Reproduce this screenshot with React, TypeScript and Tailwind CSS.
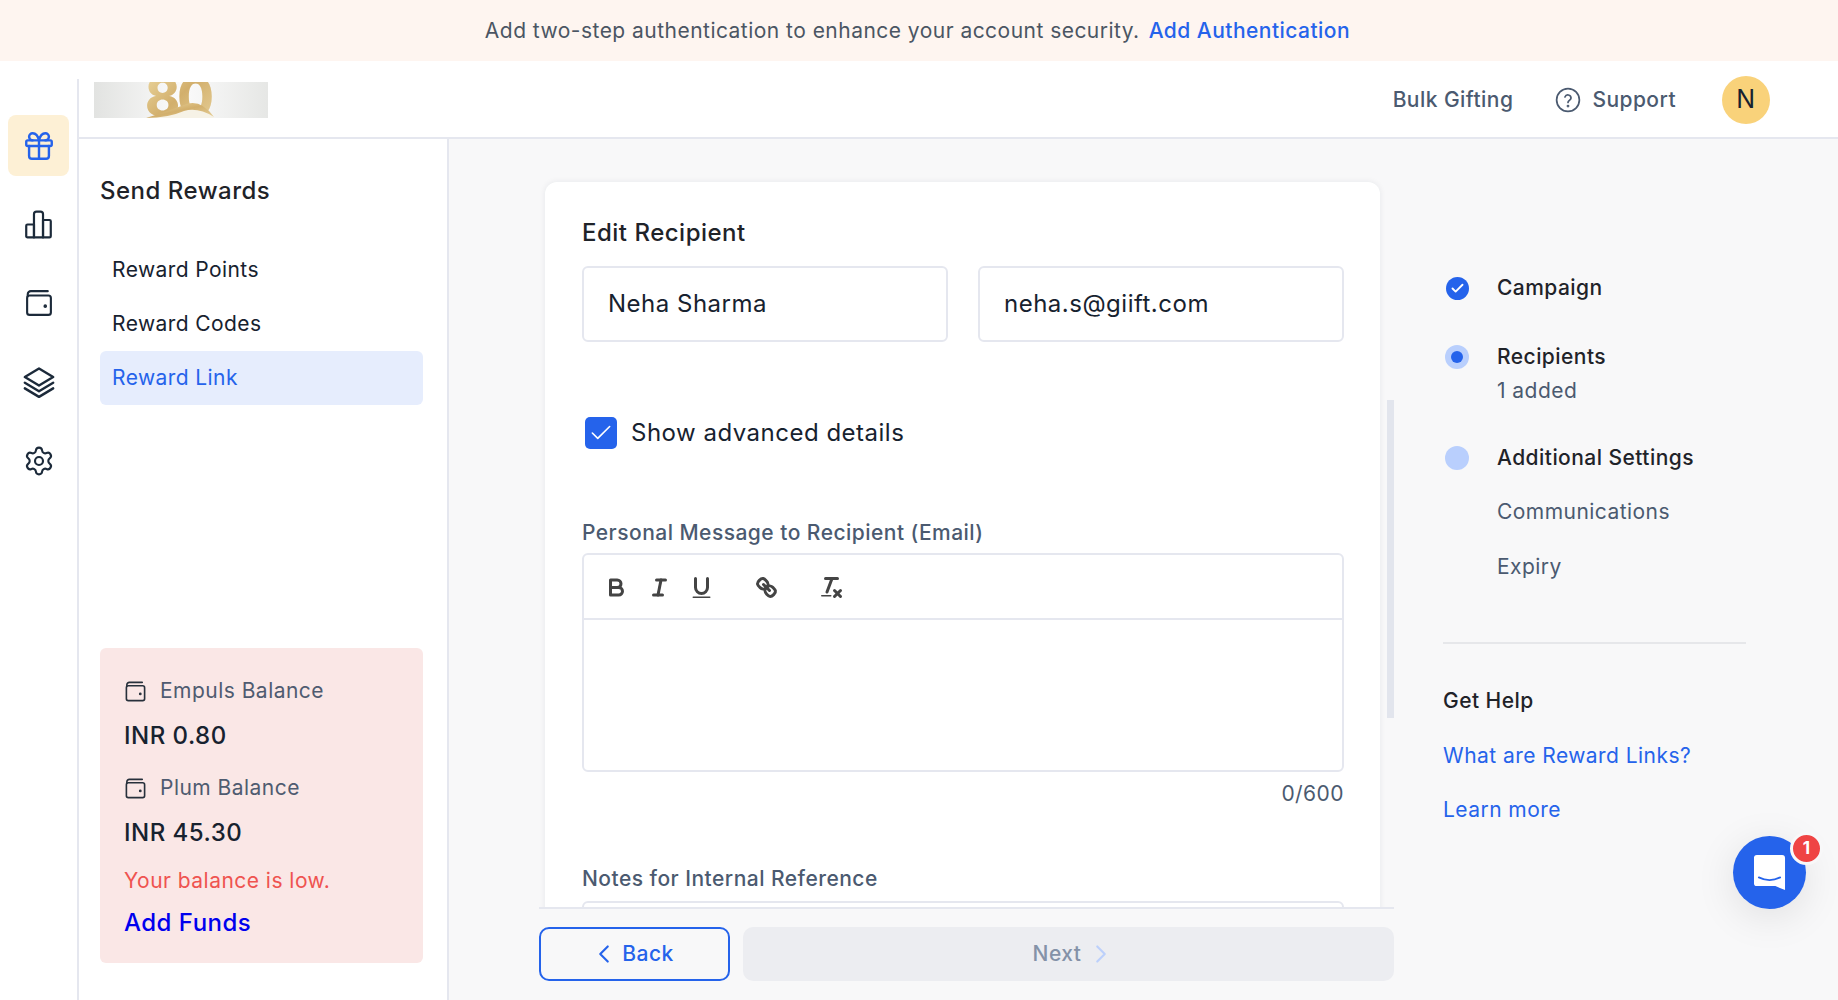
import React from "react";
import { Gift, Settings, ChevronLeft, ChevronRight, Check } from "lucide-react";

const F = "[font-family:Inter,'Liberation_Sans',sans-serif]";

function WalletIcon({ className = "" }: { className?: string }) {
  return (
    <svg viewBox="0 0 24 24" fill="none" stroke="currentColor" strokeWidth="1.7" strokeLinecap="round" strokeLinejoin="round" className={className}>
      <rect x="2.5" y="6" width="19" height="15.5" rx="2" />
      <path d="M3 6.5V5a2.5 2.5 0 0 1 2.5-2.5H19" />
      <circle cx="17" cy="14.5" r="0.6" fill="currentColor" />
    </svg>
  );
}

function BarsIcon({ className = "" }: { className?: string }) {
  return (
    <svg viewBox="0 0 24 24" fill="none" stroke="currentColor" strokeWidth="1.7" strokeLinejoin="round" className={className}>
      <path d="M2.5 13a1 1 0 0 1 1-1H8.5V22H3.5a1 1 0 0 1-1-1z" />
      <path d="M8.5 4a2 2 0 0 1 2-2h3a2 2 0 0 1 2 2v18h-7z" />
      <path d="M15.5 8.5h5a1 1 0 0 1 1 1V21a1 1 0 0 1-1 1h-5z" />
    </svg>
  );
}

function LayersIcon({ className = "" }: { className?: string }) {
  return (
    <svg viewBox="0 0 24 24" fill="none" stroke="currentColor" strokeWidth="1.7" strokeLinecap="round" strokeLinejoin="round" className={className}>
      <path d="M12 2.5 22 8.5 12 14.5 2 8.5z" />
      <path d="M2 12.5 12 18.5 22 12.5" />
      <path d="M2 16.5 12 22.5 22 16.5" />
    </svg>
  );
}

function HelpIcon({ className = "" }: { className?: string }) {
  return (
    <svg viewBox="0 0 24 24" fill="none" stroke="currentColor" strokeWidth="1.6" strokeLinecap="round" strokeLinejoin="round" className={className}>
      <circle cx="12" cy="12" r="10.5" />
      <path d="M9.2 9.2a2.9 2.9 0 0 1 5.6 1c0 1.9-2.8 2.4-2.8 4" />
      <circle cx="12" cy="17.6" r="0.5" fill="currentColor" />
    </svg>
  );
}

function Logo() {
  return (
    <div className="w-[174px] h-[36px] overflow-hidden bg-gradient-to-r from-[#e2e3e1] via-[#fbfbfb] to-[#e6e7e5]">
      <svg viewBox="0 0 174 36" className="w-full h-full">
        <defs>
          <linearGradient id="gold" x1="0" y1="0" x2="1" y2="1">
            <stop offset="0" stopColor="#efdca6" />
            <stop offset="0.5" stopColor="#d2af6c" />
            <stop offset="1" stopColor="#e8d29c" />
          </linearGradient>
        </defs>
        <text x="51" y="34" fontSize="53" fontWeight="800" letterSpacing="-3" fontFamily="Inter, sans-serif" fill="url(#gold)">80</text>
        <path d="M52 36 Q72 34 90 26 Q106 19 120 36 Z" fill="#f6f2e6" />
        <path d="M52 36 Q72 30 90 23 Q106 16 120 35 Q104 25 90 29 Q74 36 52 36Z" fill="url(#gold)" />
      </svg>
    </div>
  );
}

function Tool({ children, ml = "" }: { children: React.ReactNode; ml?: string }) {
  return (
    <span className={`w-[27px] h-[27px] block ${ml}`}>
      <svg viewBox="0 0 18 18" fill="none" stroke="#444" strokeWidth="2" strokeLinecap="round" strokeLinejoin="round" className="w-full h-full">
        {children}
      </svg>
    </span>
  );
}

function Step({ dot, label, sub }: { dot: React.ReactNode; label: string; sub?: string }) {
  return (
    <div>
      <div className="flex items-center h-[28px]">
        <span className="ml-[2px] w-[24px] h-[24px] flex items-center justify-center">{dot}</span>
        <span className="ml-[28px] text-[21px] tracking-[0.45px] font-medium text-[#1f2329]">{label}</span>
      </div>
      {sub && <div className="ml-[54px] mt-[6px] text-[21px] tracking-[0.45px] leading-[28px] text-[#4b5a70]">{sub}</div>}
    </div>
  );
}

function Balance({ label, value }: { label: string; value: string }) {
  return (
    <div>
      <div className="flex items-center h-[28px]">
        <WalletIcon className="w-[23px] h-[23px] text-[#27303b]" />
        <span className="ml-[13px] text-[21px] tracking-[0.47px] text-[#4f5b70]">{label}</span>
      </div>
      <div className="mt-[17px] h-[28px] leading-[28px] text-[24px] tracking-[0.48px] font-medium text-[#17222f]">{value}</div>
    </div>
  );
}

export default function App() {
  return (
    <div className={`${F} relative h-screen w-full overflow-hidden bg-white`}>
      <div className="h-[61px] bg-[#fef5f0] flex items-center justify-center pr-[3px] text-[21px] tracking-[0.47px]">
        <span className="text-[#4b5563]">Add two-step authentication to enhance your account security.</span>
        <a className="ml-[9px] text-[#2563eb] font-medium">Add Authentication</a>
      </div>

      <div className="flex h-[939px]">
        {/* icon rail */}
        <div className="w-[79px] shrink-0 pt-[18px]">
          <div className="h-full border-r-2 border-[#e5e7ef] pt-[36px] pl-[8px] pr-[8px] flex flex-col items-center text-[#1c2a3a]">
            <div className="w-[61px] h-[61px] rounded-[8px] bg-[#fdf0d5] flex items-center justify-center text-[#2563eb]">
              <Gift className="w-[34px] h-[34px]" strokeWidth={1.7} />
            </div>
            <div className="mt-[18px] h-[61px] w-[61px] flex items-center justify-center"><BarsIcon className="w-[31px] h-[31px]" /></div>
            <div className="mt-[17px] h-[61px] w-[61px] flex items-center justify-center"><WalletIcon className="w-[30px] h-[30px]" /></div>
            <div className="mt-[18px] h-[61px] w-[61px] flex items-center justify-center"><LayersIcon className="w-[34px] h-[34px]" /></div>
            <div className="mt-[18px] h-[61px] w-[61px] flex items-center justify-center"><Settings className="w-[32px] h-[32px]" strokeWidth={1.6} /></div>
          </div>
        </div>

        <div className="flex-1 flex flex-col min-w-0">
          {/* header */}
          <div className="h-[78px] shrink-0 border-b-2 border-[#e5e7ef] flex items-center pl-[15px] pr-[68px] bg-white">
            <div className="mt-[2px]"><Logo /></div>
            <div className="ml-auto mt-[1px] flex items-center text-[#4b5a70] text-[21px] tracking-[0.45px] font-medium">
              <span>Bulk Gifting</span>
              <HelpIcon className="ml-[42px] w-[26px] h-[26px]" />
              <span className="ml-[11px]">Support</span>
              <span className="ml-[46px] w-[48px] h-[48px] rounded-full bg-[#f9d27a] flex items-center justify-center text-[#17222f] text-[25px] font-normal">N</span>
            </div>
          </div>

          <div className="flex-1 flex min-h-0">
            {/* secondary sidebar */}
            <div className="w-[370px] shrink-0 border-r-2 border-[#e5e7ef] bg-white pl-[21px] pr-[24px] pt-[33px] flex flex-col">
              <div className="h-[38px] leading-[38px] text-[24px] tracking-[0.5px] font-medium text-[#1f2329]">Send Rewards</div>
              <div className="mt-[33px] flex flex-col text-[21px] tracking-[0.42px] text-[#17222f]">
                <div className="h-[54px] px-[12px] flex items-center">Reward Points</div>
                <div className="h-[54px] px-[12px] flex items-center">Reward Codes</div>
                <div className="h-[54px] px-[12px] flex items-center rounded-[6px] bg-[#e6edfd] text-[#2563eb]">Reward Link</div>
              </div>
              <div className="mt-[243px] h-[315px] rounded-[6px] bg-[#fae7e6] px-[24px] pt-[29px]">
                <Balance label="Empuls Balance" value="INR 0.80" />
                <div className="mt-[24px]"><Balance label="Plum Balance" value="INR 45.30" /></div>
                <div className="mt-[20px] h-[28px] leading-[28px] text-[21px] tracking-[0.47px] text-[#ef5350]">Your balance is low.</div>
                <div className="mt-[14px] h-[28px] leading-[28px] text-[24px] tracking-[0.48px] font-medium text-[#0000ee]">Add Funds</div>
              </div>
            </div>

            {/* main */}
            <div className="flex-1 flex bg-[#f8f8f9] pl-[90px] min-w-0">
              <div className="w-[855px] shrink-0 flex flex-col">
                <div className="h-[768px] flex overflow-hidden">
                  <div className="ml-[6px] mt-[43px] w-[835px] h-[900px] shrink-0 rounded-[12px] bg-white shadow-[0_0_6px_rgba(30,40,60,0.08)] pl-[37px] pt-[34px]">
                    <div className="h-[34px] leading-[34px] text-[24px] tracking-[0.5px] font-medium text-[#1f2329]">Edit Recipient</div>
                    <div className="mt-[16px] w-[762px] flex justify-between">
                      <div className="w-[366px] h-[76px] rounded-[6px] border-2 border-[#e5e7ef] pl-[24px] flex items-center text-[24px] tracking-[0.5px] text-[#17222f]">Neha Sharma</div>
                      <div className="w-[366px] h-[76px] rounded-[6px] border-2 border-[#e5e7ef] pl-[24px] flex items-center text-[24px] tracking-[0.5px] text-[#17222f]">neha.s@giift.com</div>
                    </div>
                    <div className="mt-[73px] flex items-center pl-[3px]">
                      <span className="w-[32px] h-[32px] rounded-[5px] bg-[#2563eb] flex items-center justify-center">
                        <Check className="w-[26px] h-[26px] text-white" strokeWidth={1.5} />
                      </span>
                      <span className="ml-[14px] text-[24px] tracking-[0.5px] text-[#17222f]">Show advanced details</span>
                    </div>
                    <div className="mt-[68px] h-[28px] leading-[28px] text-[21px] tracking-[0.47px] font-medium text-[#4b5a70]">Personal Message to Recipient (Email)</div>
                    <div className="mt-[6px] h-[219px] w-[762px] rounded-[6px] border-2 border-[#e5e7ef]">
                      <div className="h-[65px] border-b-2 border-[#e5e7ef] flex items-center pl-[19px] pt-[2px]">
                        <Tool>
                          <path d="M5,4H9.5A2.5,2.5,0,0,1,12,6.5v0A2.5,2.5,0,0,1,9.5,9H5A0,0,0,0,1,5,9V4A0,0,0,0,1,5,4Z" />
                          <path d="M5,9h5.5A2.5,2.5,0,0,1,13,11.5v0A2.5,2.5,0,0,1,10.5,14H5a0,0,0,0,1,0,0V9A0,0,0,0,1,5,9Z" />
                        </Tool>
                        <Tool ml="ml-[16px]">
                          <line x1="7" x2="13" y1="4" y2="4" />
                          <line x1="5" x2="11" y1="14" y2="14" />
                          <line x1="8" x2="10" y1="14" y2="4" />
                        </Tool>
                        <Tool ml="ml-[15px]">
                          <path d="M5,3V9a4.012,4.012,0,0,0,4,4H9a4.012,4.012,0,0,0,4-4V3" />
                          <rect x="3" y="15" width="12" height="1" rx="0.5" fill="#444" stroke="none" />
                        </Tool>
                        <Tool ml="ml-[38px]">
                          <line x1="7" x2="11" y1="7" y2="11" />
                          <path d="M8.9,4.577a3.476,3.476,0,0,1,.36,4.679A3.476,3.476,0,0,1,4.577,8.9C3.185,7.5,2.035,6.4,4.217,4.217S7.5,3.185,8.9,4.577Z" />
                          <path d="M13.423,9.1a3.476,3.476,0,0,0-4.679-.36,3.476,3.476,0,0,0,.36,4.679c1.392,1.392,2.5,2.542,4.679.36S14.815,10.5,13.423,9.1Z" />
                        </Tool>
                        <Tool ml="ml-[38px]">
                          <line x1="5" x2="13" y1="3" y2="3" />
                          <line x1="6" x2="9.35" y1="12" y2="3" />
                          <line x1="11" x2="15" y1="11" y2="15" />
                          <line x1="15" x2="11" y1="11" y2="15" />
                          <rect x="2" y="14" width="7" height="1" rx="0.5" fill="#444" stroke="none" />
                        </Tool>
                      </div>
                    </div>
                    <div className="mt-[8px] w-[762px] text-right h-[28px] leading-[28px] text-[21px] tracking-[0.45px] text-[#4b5a70]">0/600</div>
                    <div className="mt-[57px] h-[28px] leading-[28px] text-[21px] tracking-[0.47px] font-medium text-[#4b5a70]">Notes for Internal Reference</div>
                    <div className="mt-[8px] h-[70px] w-[762px] rounded-[6px] border-2 border-[#e5e7ef]" />
                  </div>
                  <div className="ml-[7px] mt-[261px] w-[7px] h-[318px] bg-[#e2e5ed] shrink-0" />
                </div>
                <div className="border-t-2 border-[#e5e7ef] pt-[18px] flex gap-[13px]">
                  <button className="w-[191px] h-[54px] rounded-[10px] border-2 border-[#2563eb] flex items-center justify-center text-[#2563eb] text-[21px] tracking-[0.45px] font-medium">
                    <ChevronLeft className="w-[30px] h-[30px] mr-[3px] -ml-[6px]" strokeWidth={1.7} />Back
                  </button>
                  <button className="flex-1 h-[54px] rounded-[10px] bg-[#ecedf1] pl-[12px] flex items-center justify-center text-[#8492a8] text-[21px] tracking-[0.45px] font-medium">
                    Next<ChevronRight className="w-[30px] h-[30px] ml-[5px] text-[#bcd0fb]" strokeWidth={1.7} />
                  </button>
                </div>
              </div>

              {/* right steps */}
              <div className="ml-[49px] w-[303px] shrink-0 pt-[135px]">
                <Step
                  dot={<span className="w-[23px] h-[23px] rounded-full bg-[#2563eb] flex items-center justify-center"><Check className="w-[15px] h-[15px] text-white" strokeWidth={3} /></span>}
                  label="Campaign"
                />
                <div className="mt-[41px]">
                  <Step
                    dot={<span className="w-[24px] h-[24px] rounded-full bg-[#b9cffd] flex items-center justify-center"><span className="w-[12px] h-[12px] rounded-full bg-[#2563eb]" /></span>}
                    label="Recipients"
                    sub="1 added"
                  />
                </div>
                <div className="mt-[39px]">
                  <Step dot={<span className="w-[24px] h-[24px] rounded-full bg-[#b9cffd]" />} label="Additional Settings" />
                </div>
                <div className="ml-[54px] mt-[26px] h-[28px] leading-[28px] text-[21px] tracking-[0.45px] text-[#4b5a70]">Communications</div>
                <div className="ml-[54px] mt-[27px] h-[28px] leading-[28px] text-[21px] tracking-[0.45px] text-[#4b5a70]">Expiry</div>
                <div className="mt-[61px] border-t-2 border-[#e6e7ea]" />
                <div className="mt-[43px] h-[28px] leading-[28px] text-[21px] tracking-[0.45px] font-medium text-[#1f2329]">Get Help</div>
                <div className="mt-[27px] h-[28px] leading-[28px] text-[21px] tracking-[0.45px] text-[#2563eb]">What are Reward Links?</div>
                <div className="mt-[26px] h-[28px] leading-[28px] text-[21px] tracking-[0.45px] text-[#2563eb]">Learn more</div>
              </div>
            </div>
          </div>
        </div>
      </div>

      {/* chat launcher */}
      <div className="absolute left-[1733px] top-[836px] w-[73px] h-[73px] rounded-full bg-[#2563eb] shadow-[0_8px_40px_rgba(0,0,0,0.10)] flex items-center justify-center">
        <svg viewBox="0 0 34 38" className="w-[33px] h-[37px]">
          <path d="M4 1h26a3 3 0 0 1 3 3v33l-10-4H4a3 3 0 0 1-3-3V4a3 3 0 0 1 3-3z" fill="#fff" />
          <path d="M6 24q11 5.5 22 0" fill="none" stroke="#2563eb" strokeWidth="1.8" strokeLinecap="round" />
        </svg>
        <span className="absolute -right-[14px] -top-[1px] w-[27px] h-[27px] rounded-full bg-[#ef4444] border-[3px] border-[#f8f8f9] box-content -m-[3px] flex items-center justify-center text-white text-[17px] font-bold">1</span>
      </div>
    </div>
  );
}
